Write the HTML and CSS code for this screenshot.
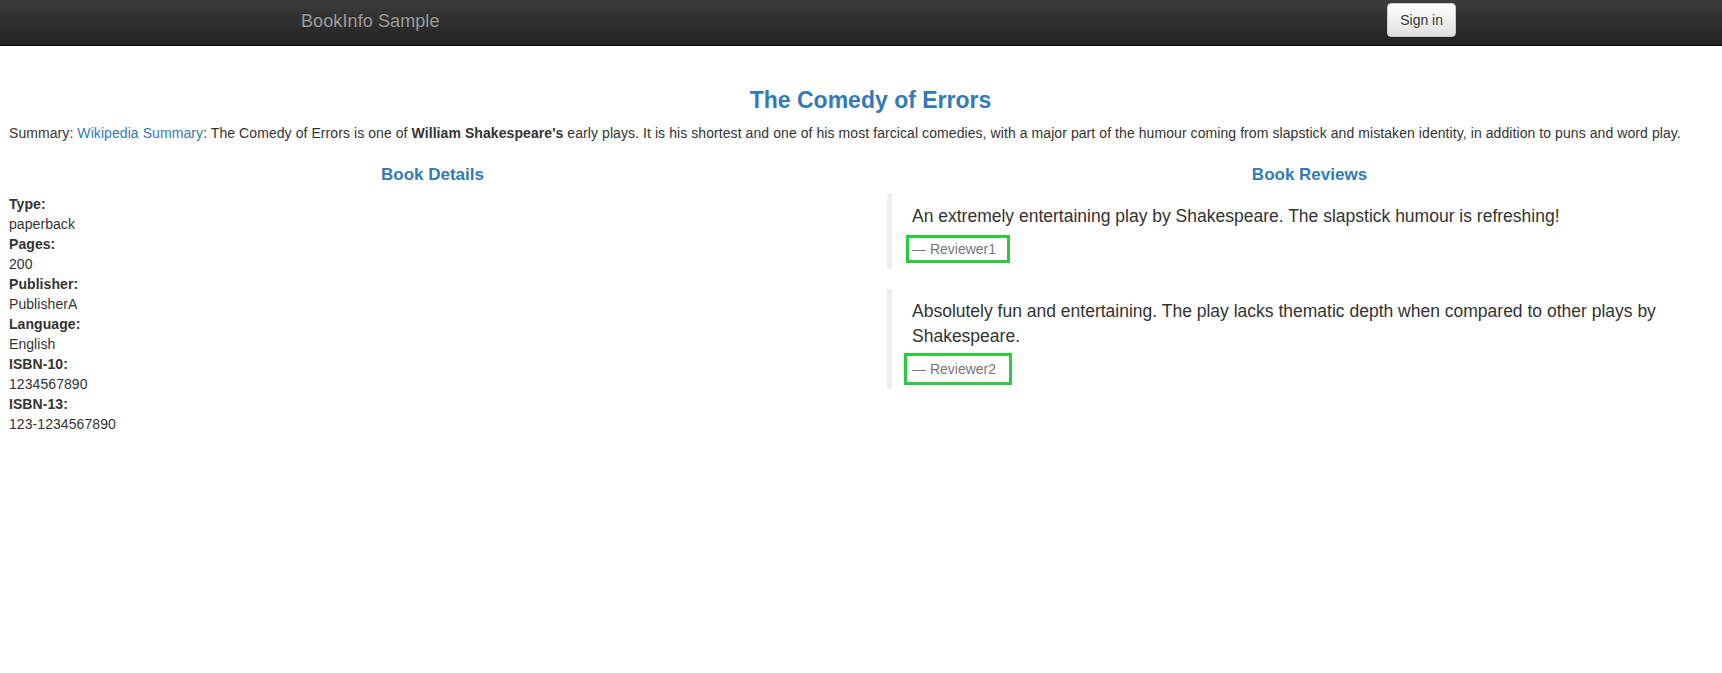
FILE: index.html
```html
<!DOCTYPE html>
<html lang="en">
<head>
<meta charset="utf-8">
<title>Simple Bookstore App</title>
<link rel="stylesheet" href="styles.css">
</head>
<body>
<header class="navbar">
  <a class="brand" href="#">BookInfo Sample</a>
  <button class="btn" type="button">Sign in</button>
</header>
<main class="page">
  <h1 class="title">The Comedy of Errors</h1>
  <p class="summary">Summary: <a href="#">Wikipedia Summary</a>: The Comedy of Errors is one of <b>William Shakespeare's</b> early plays. It is his shortest and one of his most farcical comedies, with a major part of the humour coming from slapstick and mistaken identity, in addition to puns and word play.</p>
  <div class="columns">
    <section class="details">
      <h2 class="section-title">Book Details</h2>
      <dl class="info">
        <dt>Type:</dt><dd>paperback</dd>
        <dt>Pages:</dt><dd>200</dd>
        <dt>Publisher:</dt><dd>PublisherA</dd>
        <dt>Language:</dt><dd>English</dd>
        <dt>ISBN-10:</dt><dd>1234567890</dd>
        <dt>ISBN-13:</dt><dd>123-1234567890</dd>
      </dl>
    </section>
    <section class="reviews">
      <h2 class="section-title">Book Reviews</h2>
      <blockquote class="review">
        <p>An extremely entertaining play by Shakespeare. The slapstick humour is refreshing!</p>
        <footer class="reviewer"><span class="highlight">&mdash;&nbsp;Reviewer1</span></footer>
      </blockquote>
      <blockquote class="review">
        <p>Absolutely fun and entertaining. The play lacks thematic depth when compared to other plays by Shakespeare.</p>
        <footer class="reviewer"><span class="highlight highlight-wide">&mdash;&nbsp;Reviewer2</span></footer>
      </blockquote>
    </section>
  </div>
</main>
</body>
</html>
```

FILE: styles.css
```css
html, body {
  overflow-x: hidden;
}

body {
  margin: 0;
  font-family: "Liberation Sans", Arial, Helvetica, sans-serif;
  font-size: 14px;
  line-height: 20px;
  color: #333;
  background: #fff;
}

a {
  color: #337ab7;
  text-decoration: none;
}

.navbar {
  display: flex;
  align-items: flex-start;
  height: 45px;
  padding: 0 266px 0 301px;
  background: linear-gradient(to bottom, #3c3c3c 0%, #222 100%);
  border-bottom: 1px solid #080808;
}

.brand {
  margin-top: 11px;
  font-size: 18px;
  line-height: 20px;
  color: #9d9d9d;
  letter-spacing: 0.1px;
  text-shadow: 0 -1px 0 rgba(0, 0, 0, .25);
}

.btn {
  margin-left: auto;
  margin-top: 3px;
  padding: 6px 12px;
  font-family: inherit;
  font-size: 14px;
  line-height: 20px;
  color: #333;
  background: linear-gradient(to bottom, #fff 0%, #e0e0e0 100%);
  border: 1px solid #ccc;
  border-radius: 4px;
  text-shadow: 0 1px 0 #fff;
  box-shadow: inset 0 1px 0 rgba(255, 255, 255, .15), 0 1px 1px rgba(0, 0, 0, .075);
}

.page {
  width: 1723px;
  padding: 41px 0 0 9px;
}

.title {
  margin: 0 0 10px;
  text-align: center;
  font-size: 23px;
  line-height: 26px;
  font-weight: 700;
  color: #337ab7;
}

.summary {
  margin: 0 0 22px;
  white-space: nowrap;
  letter-spacing: 0.075px;
}

.columns {
  display: grid;
  grid-template-columns: 847px 1fr;
  column-gap: 31px;
}

.section-title {
  margin: 0 0 9px;
  text-align: center;
  font-size: 17px;
  line-height: 20px;
  font-weight: 700;
  color: #337ab7;
}

.info {
  margin: 0;
  letter-spacing: 0.07px;
}

.info dt {
  font-weight: 700;
}

.info dd {
  margin: 0;
}

.review {
  margin: 0 0 20px;
  padding: 10px 20px;
  border-left: 5px solid #eee;
  font-size: 17.5px;
  line-height: 25px;
}

.review p {
  margin: 0 0 10px;
}

.reviewer {
  display: block;
  font-size: 14px;
  line-height: 20px;
  color: #777;
}

.highlight {
  display: inline-block;
  margin-left: -2px;
  padding: 0 10px 0 2px;
  outline: 3px solid #28cc3c;
  outline-offset: 1px;
}

.highlight-wide {
  outline-offset: 3px;
}
```
